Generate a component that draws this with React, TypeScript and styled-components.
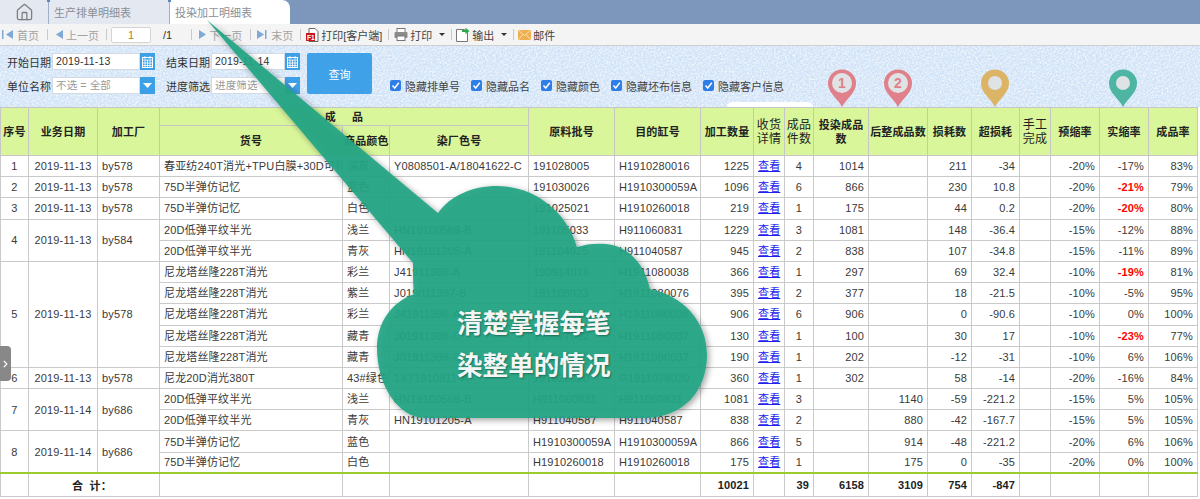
import * as React from 'react';
import styled, { createGlobalStyle } from 'styled-components';
import { Home, ChevronRight } from 'lucide-react';

const FONT = `"Liberation Sans", "Noto Sans CJK SC", sans-serif`;

const texture =
	"data:image/svg+xml," +
	encodeURIComponent(
		`<svg xmlns='http://www.w3.org/2000/svg' width='300' height='200'><filter id='n'><feTurbulence type='fractalNoise' baseFrequency='0.55' numOctaves='3' stitchTiles='stitch'/><feColorMatrix values='0 0 0 0 1  0 0 0 0 1  0 0 0 0 1  1.6 0 0 0 -0.55'/></filter><rect width='300' height='200' filter='url(#n)'/></svg>`
	);

const GlobalStyle = createGlobalStyle`
	html, body {
		margin: 0;
		background: #fff;
		overflow: hidden;
	}
	body {
		font-family: ${FONT};
		font-size: 11px;
		color: #333;
	}
`;

const Page = styled.div`
	position: relative;
	width: 1200px;
	height: 499px;
	overflow: hidden;
`;

const TabBar = styled.div`
	display: flex;
	height: 24px;
	background: #7c96bc;
`;

const Tab = styled.div<{ $w: number; $active?: boolean }>`
	position: relative;
	width: ${(p) => p.$w}px;
	display: flex;
	align-items: center;
	justify-content: ${(p) => (p.$w < 60 ? 'center' : 'flex-start')};
	padding-left: ${(p) => (p.$w < 60 ? 0 : 5)}px;
	box-sizing: border-box;
	font-size: 11px;
	color: #8b8f96;
	background: ${(p) => (p.$active ? '#fff' : '#e3e8f1')};
	border-left: ${(p) => (p.$w < 60 ? 'none' : '1px solid #9fb0c8')};
	border-top-right-radius: ${(p) => (p.$active ? '8px' : '0')};
	${(p) =>
		p.$w < 60
			? ''
			: `&::before {
		content: '';
		position: absolute;
		left: -2px;
		top: 0;
		width: 3px;
		height: 2px;
		background: #5f86b8;
	}`}
`;

const Toolbar = styled.div`
	display: flex;
	align-items: center;
	height: 22px;
	box-sizing: border-box;
	padding-left: 2px;
	background: #f4f4f4;
	border-bottom: 1px solid #cfcfcf;
`;

const ToolItem = styled.div<{ $off?: boolean }>`
	display: flex;
	align-items: center;
	gap: 2px;
	font-size: 11px;
	white-space: nowrap;
	color: ${(p) => (p.$off ? '#a3a3a3' : '#444')};
`;

const Sep = styled.span<{ $l: number; $r: number }>`
	width: 1px;
	height: 11px;
	margin: 0 ${(p) => p.$r}px 0 ${(p) => p.$l}px;
	background: #c9c9c9;
`;

const PageInput = styled.div`
	width: 40px;
	height: 16px;
	box-sizing: border-box;
	background: #fff;
	border: 1px solid #d4d4d4;
	border-radius: 2px;
	text-align: center;
	line-height: 14px;
	color: #b5811c;
	font-size: 11px;
`;

const PageTotal = styled.span`
	margin-left: 12px;
	color: #333;
	font-size: 11px;
`;

const Caret = styled.span`
	width: 0;
	height: 0;
	margin-left: 5px;
	border: 3px solid transparent;
	border-top: 3px solid #333;
	border-bottom: none;
`;

const FilterPanel = styled.div`
	display: flex;
	align-items: flex-end;
	height: 61px;
	box-sizing: border-box;
	padding: 7px 0 13px 7px;
	background-color: #cfe2f7;
	background-image: url("${texture}");
`;

const FieldGrid = styled.div`
	display: grid;
	grid-template-columns: 148px 134px;
	column-gap: 11px;
	row-gap: 7px;
`;

const Field = styled.div`
	display: flex;
	align-items: center;
	height: 17px;
	font-size: 11px;
	color: #333;
	white-space: nowrap;
`;

const FieldLabel = styled.span`
	width: 45px;
	flex: none;
`;

const FieldInput = styled.div<{ $hint?: boolean }>`
	flex: 1;
	height: 17px;
	box-sizing: border-box;
	padding-left: 3px;
	line-height: 15px;
	background: #fff;
	border: 1px solid #d5dbe2;
	font-size: 10.5px;
	letter-spacing: 0.15px;
	color: ${(p) => (p.$hint ? '#9a9a9a' : '#333')};
`;

const FieldButton = styled.div`
	flex: none;
	width: 15px;
	height: 17px;
	display: flex;
	align-items: center;
	justify-content: center;
	background: #3d9fe6;
`;

const QueryButton = styled.div`
	width: 65px;
	height: 41px;
	margin: 0 18px 0 0;
	border-radius: 2px;
	display: flex;
	align-items: center;
	justify-content: center;
	background: #3fa2e8;
	color: #fff;
	font-size: 11px;
	position: relative;
	top: 0;
`;

const CheckRow = styled.div`
	display: flex;
	align-items: center;
	gap: 11px;
	height: 17px;
`;

const CheckItem = styled.label`
	display: flex;
	align-items: center;
	gap: 4px;
	font-size: 11px;
	color: #444;
	white-space: nowrap;
`;

const CheckBox = styled.span`
	width: 11px;
	height: 11px;
	display: flex;
	align-items: center;
	justify-content: center;
	border-radius: 2px;
	background: #2f7de6;
`;

const Grid = styled.table`
	width: 1197px;
	table-layout: fixed;
	border-collapse: collapse;
	font-size: 11px;
	letter-spacing: 0.15px;
	color: #333;
	background: #fff;
`;

const Th = styled.th<{ $h?: number }>`
	height: ${(p) => p.$h ?? 17}px;
	padding: 0 1px;
	border: 1px solid #c6c6c6;
	background: #d9f69b;
	color: #222;
	font-weight: 700;
	font-size: 11px;
	line-height: 14px;
	text-align: center;
	overflow: hidden;
	white-space: nowrap;
`;

const StackTh = styled(Th)`
	font-weight: 400;
	font-size: 12px;
	white-space: normal;
`;

const Td = styled.td<{ $align?: string; $red?: boolean }>`
	height: 21.2px;
	padding: 0 4px;
	box-sizing: border-box;
	border: 1px solid #cacaca;
	line-height: 14px;
	text-align: ${(p) => p.$align ?? 'right'};
	white-space: nowrap;
	overflow: hidden;
	color: ${(p) => (p.$red ? '#f00' : '#3a3a3a')};
	font-weight: ${(p) => (p.$red ? 700 : 400)};
`;

const TotalCell = styled.td<{ $align?: string }>`
	height: 22px;
	padding: 0 4px 0 0;
	border: 1px solid #cacaca;
	border-top: 2px solid #9bcb2e;
	font-weight: 700;
	color: #222;
	text-align: ${(p) => p.$align ?? 'right'};
`;

const ViewLink = styled.a`
	color: #2222ee;
	text-decoration: underline;
`;

const OverlayArt = styled.svg`
	position: absolute;
	left: 0;
	top: 0;
	width: 1200px;
	height: 499px;
	pointer-events: none;
`;

const Slogan = styled.div`
	position: absolute;
	left: 457px;
	top: 303px;
	width: 154px;
	font-size: 25.6px;
	line-height: 42px;
	font-weight: 700;
	color: #f4f6f5;
	text-shadow: 1px 1px 2px rgba(0, 0, 0, 0.35);
	white-space: nowrap;
`;

const Pin = styled.svg<{ $x: number }>`
	position: absolute;
	left: ${(p) => p.$x - 15}px;
	top: 69px;
	width: 30px;
	height: 40px;
`;

const Notch = styled.div`
	position: absolute;
	left: 727px;
	top: 102px;
	width: 86px;
	height: 5px;
	background: #fff;
	border-radius: 5px 5px 0 0;
`;

const SideHandle = styled.div`
	position: absolute;
	left: 0;
	top: 346px;
	width: 11px;
	height: 35px;
	display: flex;
	align-items: center;
	justify-content: center;
	background: #888;
	border-radius: 0 4px 4px 0;
`;

const BlueArrow = ({ dir, bar }: { dir: 'l' | 'r'; bar?: boolean }) => (
	<svg width={bar ? 13 : 9} height="11" viewBox={bar ? '0 0 13 11' : '0 0 9 11'}>
		{dir === 'l' ? (
			<>
				{bar && <rect x="0" y="1" width="1.5" height="9" fill="#7fa9d6" />}
				<path d={bar ? 'M11 1v9L4 5.5z' : 'M8 1v9L1 5.5z'} fill="#7fa9d6" />
			</>
		) : (
			<>
				<path d="M1 1v9l7-4.5z" fill="#7fa9d6" />
				{bar && <rect x="9" y="1" width="1.5" height="9" fill="#7fa9d6" />}
			</>
		)}
	</svg>
);

const PdfIcon = () => (
	<svg width="13" height="14" viewBox="0 0 13 14">
		<path d="M3 .5h6l3 3v10H3z" fill="#fff" stroke="#666" />
		<rect x="0" y="5" width="9" height="8" fill="#c8161d" />
		<text x="1" y="11.5" fontSize="6.5" fontWeight="700" fill="#fff" fontFamily="Liberation Sans">
			F1
		</text>
	</svg>
);

const PrinterIcon = () => (
	<svg width="14" height="13" viewBox="0 0 14 13">
		<rect x="3" y="0.5" width="8" height="4" fill="#fff" stroke="#777" />
		<rect x="0.5" y="4" width="13" height="6" rx="1" fill="#8b8b8b" />
		<rect x="3" y="8" width="8" height="4.5" fill="#fff" stroke="#777" />
	</svg>
);

const ExportIcon = () => (
	<svg width="14" height="15" viewBox="0 0 14 15">
		<path d="M.5 2.5h8l3 3v9h-11z" fill="#fff" stroke="#777" />
		<path d="M6 3h3.5V.8L13.5 4l-4 3.2V5H6z" fill="#2aa84a" />
	</svg>
);

const MailIcon = () => (
	<svg width="13" height="10" viewBox="0 0 13 10">
		<rect width="13" height="10" rx="1" fill="#eeb050" />
		<path d="M0.5 .5 6.5 5.5 12.5 .5M.5 9.5 5 4.5M12.5 9.5 8 4.5" fill="none" stroke="#fbe3b4" />
	</svg>
);

const CalendarIcon = () => (
	<svg width="11" height="12" viewBox="0 0 11 12">
		<rect x="0.5" y="1.5" width="10" height="10" fill="none" stroke="#fff" />
		<path d="M0 4h11M3 0v3M8 0v3M3 4v7.500M5.500 4v7.500M8 4v7.500M0 7h11M0 9.500h11" stroke="#fff" strokeWidth=".8" />
	</svg>
);

const DownIcon = () => (
	<svg width="9" height="5" viewBox="0 0 9 5">
		<path d="M0 0h9L4.500 5z" fill="#fff" />
	</svg>
);

const TickIcon = () => (
	<svg width="9" height="9" viewBox="0 0 9 9">
		<path d="M1.500 4.500 3.700 7 7.800 1.800" fill="none" stroke="#fff" strokeWidth="1.500" />
	</svg>
);

const MapPin = ({ x, color, label }: { x: number; color: string; label?: string }) => (
	<Pin $x={x} viewBox="0 0 30 40">
		<path d="M15 38C11 30 1 24 1 14.500a14 14 0 0 1 28 0C29 24 19 30 15 38z" fill={color} />
		<circle cx="15" cy="14" r={label ? 10 : 7} fill="#dfe3e6" />
		{label && (
			<text x="15" y="19" textAnchor="middle" fontSize="14" fontWeight="700" fill={color} fontFamily="Liberation Sans">
				{label}
			</text>
		)}
	</Pin>
);

const colWidths = [28, 69, 62, 183, 47, 139, 86, 86, 53, 31, 29, 55, 59, 44, 48, 31, 49, 49, 49];

type Row = {
	seq?: [string, string, string, number];
	goods: string;
	color: string;
	dyeNo: string;
	batch: string;
	vat: string;
	qty: string;
	pieces: string;
	dyed: string;
	finished: string;
	loss: string;
	over: string;
	pre: string;
	real: string;
	rate: string;
	red?: boolean;
};

const mk = (
	seq: Row['seq'],
	goods: string,
	color: string,
	dyeNo: string,
	batch: string,
	vat: string,
	qty: string,
	pieces: string,
	dyed: string,
	finished: string,
	loss: string,
	over: string,
	pre: string,
	real: string,
	rate: string,
	red?: boolean
): Row => ({ seq, goods, color, dyeNo, batch, vat, qty, pieces, dyed, finished, loss, over, pre, real, rate, red });

const NYLON = '尼龙塔丝隆228T消光';
const LOW = '20D低弹平纹半光';
const MEM = '75D半弹仿记忆';

const rows: Row[] = [
	mk(['1', '2019-11-13', 'by578', 1], '春亚纺240T消光+TPU白膜+30D可特', '深灰', 'Y0808501-A/18041622-C', '191028005', 'H1910280016', '1225', '4', '1014', '', '211', '-34', '-20%', '-17%', '83%'),
	mk(['2', '2019-11-13', 'by578', 1], MEM, '蓝色', '', '191030026', 'H1910300059A', '1096', '6', '866', '', '230', '10.8', '-20%', '-21%', '79%', true),
	mk(['3', '2019-11-13', 'by578', 1], MEM, '白色', '', '191025021', 'H1910260018', '219', '1', '175', '', '44', '0.2', '-20%', '-20%', '80%', true),
	mk(['4', '2019-11-13', 'by584', 2], LOW, '浅兰', 'HN19100569-B', '191105033', 'H911060831', '1229', '3', '1081', '', '148', '-36.4', '-15%', '-12%', '88%'),
	mk(undefined, LOW, '青灰', 'HN19101205-A', '191104025', 'H911040587', '945', '2', '838', '', '107', '-34.8', '-15%', '-11%', '89%'),
	mk(['5', '2019-11-13', 'by578', 5], NYLON, '彩兰', 'J41911396-A', '190914016', 'H1911080038', '366', '1', '297', '', '69', '32.4', '-10%', '-19%', '81%', true),
	mk(undefined, NYLON, '紫兰', 'J019011397-B', '191108023', 'H1911080076', '395', '2', '377', '', '18', '-21.5', '-10%', '-5%', '95%'),
	mk(undefined, NYLON, '彩兰', 'J41911396-A', '190914016', 'H1911080038', '906', '6', '906', '', '0', '-90.6', '-10%', '0%', '100%'),
	mk(undefined, NYLON, '藏青', 'J01911398-C', '190527002', 'H1911080037', '130', '1', '100', '', '30', '17', '-10%', '-23%', '77%', true),
	mk(undefined, NYLON, '藏青', 'J01911398-C', '190527002', 'H1911080037', '190', '1', '202', '', '-12', '-31', '-10%', '6%', '106%'),
	mk(['6', '2019-11-13', 'by578', 1], '尼龙20D消光380T', '43#绿色', '1X71910911-A', '191025020', 'G1911078020', '360', '1', '302', '', '58', '-14', '-20%', '-16%', '84%'),
	mk(['7', '2019-11-14', 'by686', 2], LOW, '浅兰', 'HN19100569-B', 'H911060831', 'H911060831', '1081', '3', '', '1140', '-59', '-221.2', '-15%', '5%', '105%'),
	mk(undefined, LOW, '青灰', 'HN19101205-A', 'H911040587', 'H911040587', '838', '2', '', '880', '-42', '-167.7', '-15%', '5%', '105%'),
	mk(['8', '2019-11-14', 'by686', 2], MEM, '蓝色', '', 'H1910300059A', 'H1910300059A', '866', '5', '', '914', '-48', '-221.2', '-20%', '6%', '106%'),
	mk(undefined, MEM, '白色', '', 'H1910260018', 'H1910260018', '175', '1', '', '175', '0', '-35', '-20%', '0%', '100%'),
];

const checks = ['隐藏排单号', '隐藏品名', '隐藏颜色', '隐藏坯布信息', '隐藏客户信息'];

export default function App() {
	return (
		<Page>
			<GlobalStyle />
			<TabBar>
				<Tab $w={48}>
					<Home size={19} color="#7d7d7d" strokeWidth={1.6} />
				</Tab>
				<Tab $w={121}>生产排单明细表</Tab>
				<Tab $w={121} $active>
					投染加工明细表
				</Tab>
			</TabBar>
			<Toolbar>
				<ToolItem $off>
					<BlueArrow dir="l" bar />
					首页
				</ToolItem>
				<Sep $l={8} $r={7} />
				<ToolItem $off>
					<BlueArrow dir="l" />
					上一页
				</ToolItem>
				<Sep $l={7} $r={4} />
				<PageInput>1</PageInput>
				<PageTotal>/1</PageTotal>
				<Sep $l={19} $r={6} />
				<ToolItem $off>
					<BlueArrow dir="r" />
					下一页
				</ToolItem>
				<Sep $l={8} $r={5} />
				<ToolItem $off>
					<BlueArrow dir="r" bar />
					末页
				</ToolItem>
				<Sep $l={7} $r={5} />
				<ToolItem>
					<PdfIcon />
					打印[客户端]
				</ToolItem>
				<Sep $l={6} $r={5} />
				<ToolItem>
					<PrinterIcon />
					打印
					<Caret />
				</ToolItem>
				<Sep $l={6} $r={4} />
				<ToolItem>
					<ExportIcon />
					输出
					<Caret />
				</ToolItem>
				<Sep $l={6} $r={4} />
				<ToolItem>
					<MailIcon />
					邮件
				</ToolItem>
			</Toolbar>
			<FilterPanel>
				<FieldGrid>
					<Field>
						<FieldLabel>开始日期:</FieldLabel>
						<FieldInput>2019-11-13</FieldInput>
						<FieldButton>
							<CalendarIcon />
						</FieldButton>
					</Field>
					<Field>
						<FieldLabel>结束日期:</FieldLabel>
						<FieldInput>2019-11-14</FieldInput>
						<FieldButton>
							<CalendarIcon />
						</FieldButton>
					</Field>
					<Field>
						<FieldLabel>单位名称:</FieldLabel>
						<FieldInput $hint>不选 = 全部</FieldInput>
						<FieldButton>
							<DownIcon />
						</FieldButton>
					</Field>
					<Field>
						<FieldLabel>进度筛选:</FieldLabel>
						<FieldInput $hint>进度筛选</FieldInput>
						<FieldButton>
							<DownIcon />
						</FieldButton>
					</Field>
				</FieldGrid>
				<QueryButton style={{ marginLeft: 7 }}>查询</QueryButton>
				<CheckRow>
					{checks.map((c) => (
						<CheckItem key={c}>
							<CheckBox>
								<TickIcon />
							</CheckBox>
							{c}
						</CheckItem>
					))}
				</CheckRow>
			</FilterPanel>
			<Grid>
				<colgroup>
					{colWidths.map((w, i) => (
						<col key={i} style={{ width: w }} />
					))}
				</colgroup>
				<thead>
					<tr>
						<Th rowSpan={2}>序号</Th>
						<Th rowSpan={2}>业务日期</Th>
						<Th rowSpan={2}>加工厂</Th>
						<Th colSpan={3}>成&nbsp;&nbsp;&nbsp;&nbsp;&nbsp;品</Th>
						<Th rowSpan={2}>原料批号</Th>
						<Th rowSpan={2}>目的缸号</Th>
						<Th rowSpan={2}>加工数量</Th>
						<StackTh rowSpan={2}>收货详情</StackTh>
						<StackTh rowSpan={2}>成品件数</StackTh>
						<Th rowSpan={2} style={{ whiteSpace: 'normal' }}>
							投染成品数
						</Th>
						<Th rowSpan={2}>后整成品数</Th>
						<Th rowSpan={2}>损耗数</Th>
						<Th rowSpan={2}>超损耗</Th>
						<StackTh rowSpan={2}>手工完成</StackTh>
						<Th rowSpan={2}>预缩率</Th>
						<Th rowSpan={2}>实缩率</Th>
						<Th rowSpan={2}>成品率</Th>
					</tr>
					<tr>
						<Th $h={29}>货号</Th>
						<Th $h={29}>商品颜色</Th>
						<Th $h={29}>染厂色号</Th>
					</tr>
				</thead>
				<tbody>
					{rows.map((r, i) => (
						<tr key={i}>
							{r.seq && (
								<>
									<Td $align="center" rowSpan={r.seq[3]}>
										{r.seq[0]}
									</Td>
									<Td $align="center" rowSpan={r.seq[3]}>
										{r.seq[1]}
									</Td>
									<Td $align="left" rowSpan={r.seq[3]}>
										{r.seq[2]}
									</Td>
								</>
							)}
							<Td $align="left">{r.goods}</Td>
							<Td $align="left">{r.color}</Td>
							<Td $align="left">{r.dyeNo}</Td>
							<Td $align="left">{r.batch}</Td>
							<Td $align="left">{r.vat}</Td>
							<Td>{r.qty}</Td>
							<Td $align="center">
								<ViewLink>查看</ViewLink>
							</Td>
							<Td $align="center">{r.pieces}</Td>
							<Td>{r.dyed}</Td>
							<Td>{r.finished}</Td>
							<Td>{r.loss}</Td>
							<Td>{r.over}</Td>
							<Td />
							<Td>{r.pre}</Td>
							<Td $red={r.red}>{r.real}</Td>
							<Td>{r.rate}</Td>
						</tr>
					))}
					<tr>
						<TotalCell />
						<TotalCell colSpan={2} $align="center">
							合&nbsp;&nbsp;计：
						</TotalCell>
						<TotalCell />
						<TotalCell />
						<TotalCell />
						<TotalCell />
						<TotalCell />
						<TotalCell>10021</TotalCell>
						<TotalCell />
						<TotalCell>39</TotalCell>
						<TotalCell>6158</TotalCell>
						<TotalCell>3109</TotalCell>
						<TotalCell>754</TotalCell>
						<TotalCell>-847</TotalCell>
						<TotalCell />
						<TotalCell />
						<TotalCell />
						<TotalCell />
					</tr>
				</tbody>
			</Grid>
			<Notch />
			<MapPin x={842} color="#e0808a" label="1" />
			<MapPin x={898} color="#e0808a" label="2" />
			<MapPin x={995} color="#dcb465" />
			<MapPin x={1123} color="#4db5a2" />
			<SideHandle>
				<ChevronRight size={12} color="#fff" strokeWidth={2.5} />
			</SideHandle>
			<OverlayArt viewBox="0 0 1200 499">
				<defs>
					<filter id="cloudShadow" x="-10%" y="-10%" width="120%" height="120%">
						<feDropShadow dx="2" dy="2" stdDeviation="3" floodColor="#000" floodOpacity="0.4" />
					</filter>
				</defs>
				<path
					d="M207 20L438 213C450 196 472 186 497 186C535 186 567 212 577 247C586 244 596 243 606 244C628 246 645 264 650 289C684 296 707 322 707 355C707 392 682 418 645 418L425 418C398 418 377 385 377 348C377 322 392 302 414 294C413 285 413 272 413 263Z"
					fill="#24a583"
					fillOpacity="0.93"
					filter="url(#cloudShadow)"
				/>
			</OverlayArt>
			<Slogan>
				清楚掌握每笔
				<br />
				染整单的情况
			</Slogan>
		</Page>
	);
}
